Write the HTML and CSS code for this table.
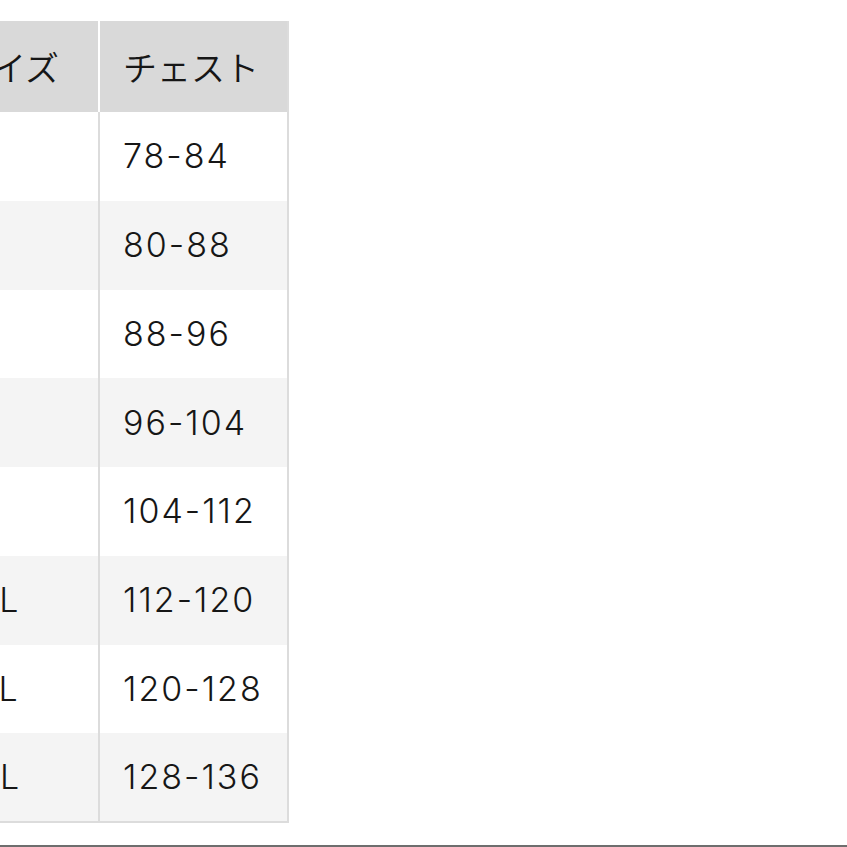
FILE: index.html
```html
<!DOCTYPE html>
<html lang="ja">
<head>
<meta charset="utf-8">
<link rel="stylesheet" href="styles.css">
</head>
<body>
<div class="page">
  <table class="size-table">
    <thead>
      <tr><th class="c1">サイズ</th><th class="c2">チェスト</th></tr>
    </thead>
    <tbody>
      <tr><td class="c1">XS</td><td class="c2">78-84</td></tr>
      <tr><td class="c1">S</td><td class="c2">80-88</td></tr>
      <tr><td class="c1">M</td><td class="c2">88-96</td></tr>
      <tr><td class="c1">L</td><td class="c2">96-104</td></tr>
      <tr><td class="c1">XL</td><td class="c2">104-112</td></tr>
      <tr><td class="c1">2XL</td><td class="c2">112-120</td></tr>
      <tr><td class="c1">3XL</td><td class="c2">120-128</td></tr>
      <tr><td class="c1">4XL</td><td class="c2">128-136</td></tr>
    </tbody>
  </table>
  <div class="rule"></div>
</div>
</body>
</html>
```
FILE: styles.css
```css
html, body {
  margin: 0;
  padding: 0;
  background: #ffffff;
}
.page {
  width: 847px;
  height: 847px;
  overflow: hidden;
  position: relative;
  padding-top: 21px;
  box-sizing: border-box;
  color: #161616;
}
.size-table {
  margin-left: -68px;
  border-collapse: collapse;
  border-spacing: 0;
  table-layout: fixed;
  border-right: 2px solid #dcdcdc;
  border-bottom: 2px solid #dcdcdc;
}
.size-table th,
.size-table td {
  padding: 0 0 0 23px;
  text-align: left;
  vertical-align: middle;
  font-size: 34px;
  white-space: nowrap;
  box-sizing: border-box;
}
.size-table th {
  height: 91px;
  background: #d9d9d9;
  font-family: "Noto Sans CJK JP", sans-serif;
  font-weight: 350;
}
.size-table th.c1 {
  padding-left: 26px;
}
.size-table td {
  height: 88.75px;
  font-family: Inter, "Noto Sans CJK JP", sans-serif;
  font-weight: 300;
  letter-spacing: 2px;
  padding-bottom: 1px;
}
.size-table td.c1 {
  letter-spacing: 0.5px;
}
.size-table .c1 {
  width: 167px;
}
.size-table .c2 {
  width: 189px;
}
.size-table th.c1 {
  border-right: 2px solid #ffffff;
}
.size-table td.c1 {
  border-right: 2px solid #dcdcdc;
}
.size-table tbody tr:nth-child(odd) td {
  background: #ffffff;
}
.size-table tbody tr:nth-child(even) td {
  background: #f4f4f4;
}
.rule {
  position: absolute;
  left: 0;
  right: 0;
  top: 845px;
  height: 2px;
  background: #6e6e6e;
}
```
